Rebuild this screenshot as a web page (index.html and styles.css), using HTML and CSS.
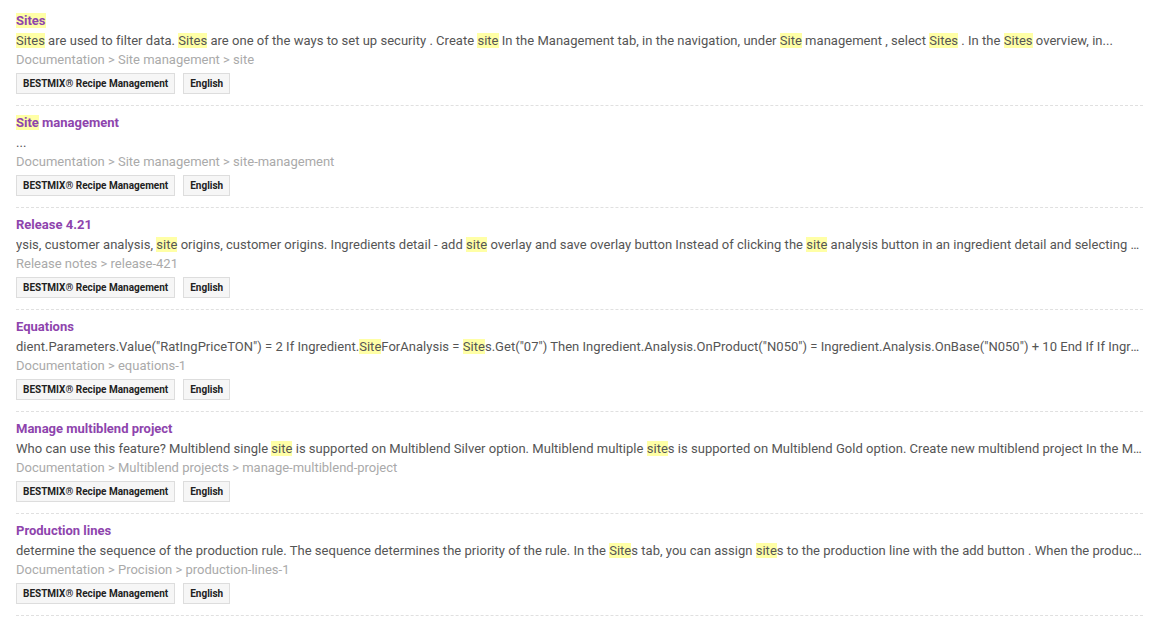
FILE: index.html
```html
<!DOCTYPE html>
<html lang="en">
<head>
    <meta charset="UTF-8">
    <meta name="viewport" content="width=device-width, initial-scale=1.0">
    <title>Search results</title>
    <link rel="stylesheet" href="styles.css">
</head>
<body>
    <div class="results">
        <div class="result">
            <a class="result-title" href="#"><mark>Sites</mark></a>
            <p class="result-text"><mark>Sites</mark> are used to filter data. <mark>Sites</mark> are one of the ways to set up security . Create <mark>site</mark> In the Management tab, in the navigation, under <mark>Site</mark> management , select <mark>Sites</mark> . In the <mark>Sites</mark> overview, in...</p>
            <p class="result-path">Documentation &gt; Site management &gt; site</p>
            <div class="tags">
                <span class="tag">BESTMIX® Recipe Management</span>
                <span class="tag">English</span>
            </div>
        </div>

        <div class="result">
            <a class="result-title" href="#"><mark>Site</mark> management</a>
            <p class="result-text">...</p>
            <p class="result-path">Documentation &gt; Site management &gt; site-management</p>
            <div class="tags">
                <span class="tag">BESTMIX® Recipe Management</span>
                <span class="tag">English</span>
            </div>
        </div>

        <div class="result">
            <a class="result-title" href="#">Release 4.21</a>
            <p class="result-text">ysis, customer analysis, <mark>site</mark> origins, customer origins. Ingredients detail - add <mark>site</mark> overlay and save overlay button Instead of clicking the <mark>site</mark> analysis button in an ingredient detail and selecting an analysis from the list, you can now add the overlay directly</p>
            <p class="result-path">Release notes &gt; release-421</p>
            <div class="tags">
                <span class="tag">BESTMIX® Recipe Management</span>
                <span class="tag">English</span>
            </div>
        </div>

        <div class="result">
            <a class="result-title" href="#">Equations</a>
            <p class="result-text">dient.Parameters.Value("RatIngPriceTON") = 2 If Ingredient.<mark>Site</mark>ForAnalysis = <mark>Site</mark>s.Get("07") Then Ingredient.Analysis.OnProduct("N050") = Ingredient.Analysis.OnBase("N050") + 10 End If If Ingredient.Code = "0001" Then</p>
            <p class="result-path">Documentation &gt; equations-1</p>
            <div class="tags">
                <span class="tag">BESTMIX® Recipe Management</span>
                <span class="tag">English</span>
            </div>
        </div>

        <div class="result">
            <a class="result-title" href="#">Manage multiblend project</a>
            <p class="result-text">Who can use this feature? Multiblend single <mark>site</mark> is supported on Multiblend Silver option. Multiblend multiple <mark>site</mark>s is supported on Multiblend Gold option. Create new multiblend project In the Management tab</p>
            <p class="result-path">Documentation &gt; Multiblend projects &gt; manage-multiblend-project</p>
            <div class="tags">
                <span class="tag">BESTMIX® Recipe Management</span>
                <span class="tag">English</span>
            </div>
        </div>

        <div class="result">
            <a class="result-title" href="#">Production lines</a>
            <p class="result-text">determine the sequence of the production rule. The sequence determines the priority of the rule. In the <mark>Site</mark>s tab, you can assign <mark>site</mark>s to the production line with the add button . When the production line is saved</p>
            <p class="result-path">Documentation &gt; Procision &gt; production-lines-1</p>
            <div class="tags">
                <span class="tag">BESTMIX® Recipe Management</span>
                <span class="tag">English</span>
            </div>
        </div>
    </div>
</body>
</html>
```

FILE: styles.css
```css
body { margin: 0; font-family: Roboto, "Liberation Sans", sans-serif; background-color: #fff; color: #555; }
.results { padding: 4px 18px 0 16px; }
.result { padding: 7px 0 11px; border-bottom: 1px dashed #e0e0e0; }
.result-title { display: block; font-size: 13px; line-height: 20px; font-weight: bold; color: #8e44ad; text-decoration: none; }
.result-text { margin: 0; font-size: 13px; line-height: 19px; letter-spacing: 0.025px; color: #555; white-space: nowrap; overflow: hidden; text-overflow: ellipsis; }
.result-path { margin: 0; font-size: 13px; line-height: 19px; color: #aaa; }
mark { background-color: #ffffa6; color: inherit; }
.tags { display: flex; gap: 8px; margin-top: 4px; }
.tag { font-size: 10px; line-height: 19px; font-weight: bold; color: #222; padding: 0 6px; border: 1px solid #ddd; background-color: #f6f6f6; }
```
